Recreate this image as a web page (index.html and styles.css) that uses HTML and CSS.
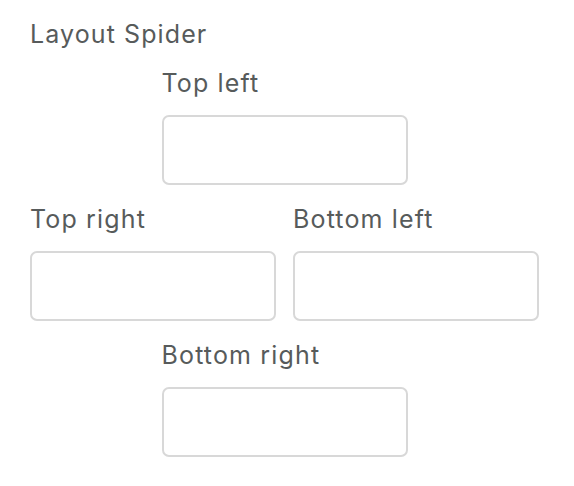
FILE: index.html
```html
<!DOCTYPE html>
<html>
<head>
<meta charset="utf-8">
<link rel="stylesheet" href="styles.css">
</head>
<body>
<div class="spider">
  <div class="title">Layout Spider</div>
  <div class="grid">
    <div class="row center">
      <label class="field"><span class="label">Top left</span><input class="box" type="text"></label>
    </div>
    <div class="row">
      <label class="field"><span class="label">Top right</span><input class="box" type="text"></label>
      <label class="field"><span class="label">Bottom left</span><input class="box" type="text"></label>
    </div>
    <div class="row center">
      <label class="field"><span class="label">Bottom right</span><input class="box" type="text"></label>
    </div>
  </div>
</div>
</body>
</html>
```
FILE: styles.css
```css
html, body {
  margin: 0;
  padding: 0;
  background: #fff;
}
body {
  font-family: Inter, "Liberation Sans", sans-serif;
  color: #575b5b;
}
.spider {
  width: 509px;
  padding: 19px 0 0 30px;
}
.title {
  font-size: 25px;
  line-height: 30px;
  letter-spacing: 1.1px;
}
.grid {
  display: flex;
  flex-direction: column;
  gap: 19px;
  margin-top: 19px;
}
.row {
  display: flex;
  gap: 17px;
}
.row.center {
  justify-content: center;
}
.field {
  display: flex;
  flex-direction: column;
  gap: 17px;
  width: 246px;
}
.label {
  font-size: 25px;
  line-height: 30px;
  letter-spacing: 1.15px;
}
.box {
  box-sizing: border-box;
  width: 246px;
  height: 70px;
  margin: 0;
  border: 2px solid #d8d8d8;
  border-radius: 7px;
  background: #fff;
  outline: none;
}
```
